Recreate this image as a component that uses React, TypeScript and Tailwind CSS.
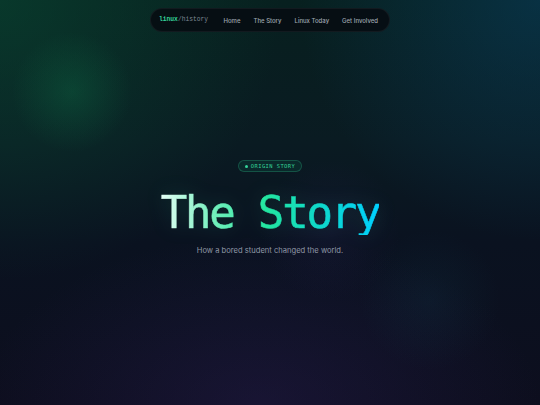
import React from 'react';

const links = ['Home', 'The Story', 'Linux Today', 'Get Involved'];

const App: React.FC = () => {
    return (
        <div className="relative w-full h-[405px] overflow-hidden bg-[linear-gradient(180deg,#07201f_0%,#0a1b22_35%,#0a1220_60%,#0d0e1e_100%)]">
            {/* Glow blobs */}
            <div className="absolute inset-0 bg-[radial-gradient(circle_at_0px_0px,rgba(10,80,55,0.5),transparent_280px)]" />
            <div className="absolute inset-0 bg-[radial-gradient(circle_at_540px_0px,rgba(10,70,110,0.45),transparent_240px)]" />
            <div className="absolute inset-0 bg-[radial-gradient(circle_at_72px_92px,rgba(16,140,85,0.24),transparent_60px)]" />
            <div className="absolute inset-0 bg-[radial-gradient(ellipse_280px_170px_at_260px_405px,rgba(50,35,100,0.3),transparent)]" />
            <div className="absolute inset-0 bg-[radial-gradient(circle_at_430px_300px,rgba(20,80,100,0.14),transparent_70px)]" />
            <div className="absolute inset-0 bg-[radial-gradient(circle_at_330px_230px,rgba(45,35,90,0.2),transparent_70px)]" />

            <main className="relative flex flex-col items-center">
                {/* Nav */}
                <nav className="mt-2 h-6 w-[240px] rounded-full bg-[#070c12]/90 border border-white/5 flex items-center pl-2 pr-[11px]">
                    <span className="font-['Liberation_Mono',monospace] text-[6.3px] text-[#7d8792]">
                        <span className="font-bold text-[#34d399]">linux</span>/history
                    </span>
                    <div className="ml-auto flex items-center gap-[13px] font-['Inter',sans-serif] text-[6px] font-medium text-[#9ea7b1]">
                        {links.map((l) => (
                            <span key={l}>{l}</span>
                        ))}
                    </div>
                </nav>

                {/* Badge */}
                <div className="mt-[128px] h-3 px-[6px] rounded-full border border-[#34d399]/25 bg-[#10b981]/10 flex items-center gap-[3px] font-['DejaVu_Sans_Mono',monospace] text-[5.4px] tracking-[0.45px] text-[#34d399]">
                    <span className="w-[3px] h-[3px] rounded-full bg-[#34d399]" />
                    ORIGIN STORY
                </div>

                {/* Title */}
                <h1 className="mt-[19px] text-[44px] leading-none font-normal tracking-[-0.05em] font-['DejaVu_Sans_Mono',monospace] [-webkit-text-stroke:0.6px_transparent] bg-[linear-gradient(90deg,#e4fff5_0%,#6ff0bb_25%,#22e6a0_48%,#0fd8c8_72%,#00d0ff_100%)] bg-clip-text text-transparent drop-shadow-[0_0_10px_rgba(45,230,170,0.15)]">
                    The Story
                </h1>

                {/* Subtitle */}
                <p className="mt-[10px] text-[7.6px] leading-[12px] font-['Inter',sans-serif] text-[#8f98a6]">
                    How a bored student changed the world.
                </p>
            </main>
        </div>
    );
};

export default App;
